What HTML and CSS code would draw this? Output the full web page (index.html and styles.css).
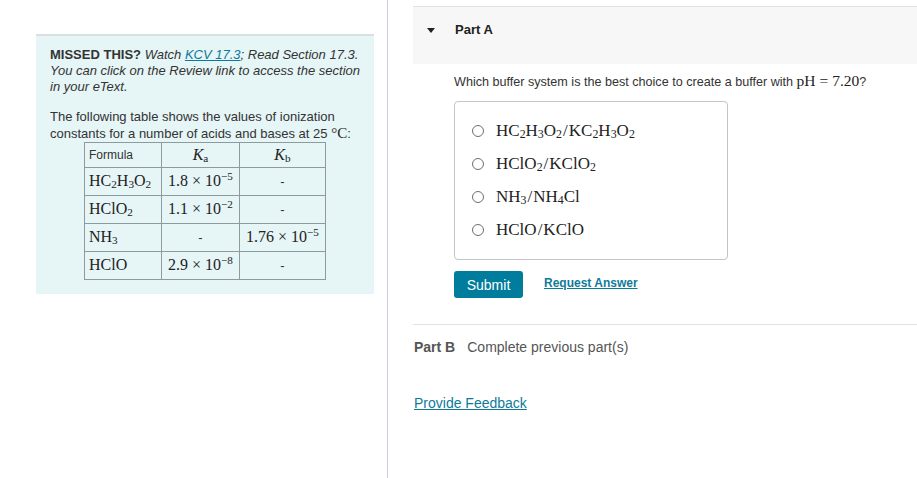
FILE: index.html
```html
<!DOCTYPE html>
<html lang="en">
<head>
<meta charset="utf-8">
<title>Part A</title>
<link rel="stylesheet" href="styles.css">
</head>
<body>
<div class="page">
  <aside class="left">
    <div class="panel">
      <p class="missed"><b>MISSED THIS?</b><span class="sp"> </span><i>Watch</i><span class="sp"> </span><a class="link"><i>KCV 17.3</i></a><i>; Read Section 17.3.</i> <i>You can click on the Review link to access the section in your eText.</i></p>
      <p><span>The following table shows the values of ionization</span> <span>constants for a number of acids and bases at 25</span><span class="sp"> </span><span class="m deg">°C</span><span>:</span></p>
      <table class="ktable">
        <colgroup><col class="c1"><col class="c2"><col class="c3"></colgroup>
        <tr class="head"><td class="f">Formula</td><td><span class="m"><i>K</i><sub>a</sub></span></td><td><span class="m"><i>K</i><sub>b</sub></span></td></tr>
        <tr><td class="f"><span class="m">HC<sub>2</sub>H<sub>3</sub>O<sub>2</sub></span></td><td><span class="m">1.8 × 10<sup>−5</sup></span></td><td>-</td></tr>
        <tr><td class="f"><span class="m">HClO<sub>2</sub></span></td><td><span class="m">1.1 × 10<sup>−2</sup></span></td><td>-</td></tr>
        <tr><td class="f"><span class="m">NH<sub>3</sub></span></td><td>-</td><td><span class="m">1.76 × 10<sup>−5</sup></span></td></tr>
        <tr><td class="f"><span class="m">HClO</span></td><td><span class="m">2.9 × 10<sup>−8</sup></span></td><td>-</td></tr>
      </table>
    </div>
  </aside>
  <main class="right">
    <section class="part-a">
      <div class="part-head"><span class="tri"></span><span class="part-title">Part A</span></div>
      <div class="part-body">
        <p class="question">Which buffer system is the best choice to create a buffer with <span class="m">pH<span class="eq">=</span>7.20</span>?</p>
        <div class="options">
          <div class="opt"><span class="radio"></span><span class="m">HC<sub>2</sub>H<sub>3</sub>O<sub>2</sub><span class="sl">/</span>KC<sub>2</sub>H<sub>3</sub>O<sub>2</sub></span></div>
          <div class="opt"><span class="radio"></span><span class="m">HClO<sub>2</sub><span class="sl">/</span>KClO<sub>2</sub></span></div>
          <div class="opt"><span class="radio"></span><span class="m">NH<sub>3</sub><span class="sl">/</span>NH<sub>4</sub>Cl</span></div>
          <div class="opt"><span class="radio"></span><span class="m">HClO<span class="sl">/</span>KClO</span></div>
        </div>
        <div class="actions">
          <button class="submit" type="button">Submit</button>
          <a class="request">Request Answer</a>
        </div>
      </div>
    </section>
    <section class="part-b"><b>Part B</b><span class="pb-text">Complete previous part(s)</span></section>
    <a class="feedback">Provide Feedback</a>
  </main>
</div>
</body>
</html>
```

FILE: styles.css
```css
* { box-sizing: border-box; }
html, body { margin: 0; padding: 0; background: #fff; }
body { font-family: "Liberation Sans", Arial, sans-serif; color: #333; }

.page { display: flex; min-height: 478px; }

.left { width: 387px; flex: none; padding: 34px 13px 0 36px; }
.panel {
  background: #e6f5f6;
  border-top: 2px solid #dadfe1;
  padding: 11px 14px 14px 14px;
  font-size: 13px;
  line-height: 16px;
}
.panel p { margin: 0; }
.panel p + p { margin-top: 14px; }
.link { color: #0e7a9b; text-decoration: underline; }

.m { font-family: "Liberation Serif", "Times New Roman", serif; color: #222; }
.m sub, .m sup { font-size: 0.7em; line-height: 0; }
.m sub { vertical-align: -0.2em; }
.m sup { vertical-align: 0.55em; }
.deg { font-size: 15px; }
.sl { margin: 0 1px; }
.eq { margin: 0 4px; }

.ktable {
  margin-left: 34px;
  border-collapse: collapse;
  width: 241px;
  table-layout: fixed;
}
.ktable .c1 { width: 77px; }
.ktable .c2 { width: 78px; }
.ktable .c3 { width: 86px; }
.ktable td {
  border: 1px solid #8e9a9c;
  height: 28px;
  padding: 0 2px;
  text-align: center;
  vertical-align: middle;
  font-size: 13px;
  white-space: nowrap;
}
.ktable .head td { height: 25px; font-size: 12px; }
.ktable td.f { text-align: left; padding-left: 4px; }
.ktable .m { font-size: 16px; }

.right { flex: 1; border-left: 1px solid #c7cfd8; padding-left: 25px; }

.part-head {
  margin-top: 6px;
  border-top: 1px solid #dfe3e7;
  background: #f7f7f7;
  height: 58px;
  padding: 15px 0 0 14px;
  display: flex;
  align-items: flex-start;
}
.tri {
  width: 0; height: 0;
  border-left: 4px solid transparent;
  border-right: 4px solid transparent;
  border-top: 5px solid #222;
  margin-top: 6px;
}
.part-title { margin-left: 20px; font-size: 13px; font-weight: bold; line-height: 16px; color: #222; }

.part-body { padding-left: 41px; }
.question { margin: 9px 0 0 0; font-size: 12.6px; line-height: 16px; }
.question .m { font-size: 15.5px; }

.options {
  margin-top: 11px;
  width: 274px;
  border: 1px solid #c4c4c4;
  border-radius: 4px;
  padding: 12px 0 13px 17px;
}
.opt { height: 33px; display: flex; align-items: center; }
.radio {
  width: 12px; height: 12px;
  border: 1px solid #6e6e6e;
  border-radius: 50%;
  background: #fff;
  flex: none;
}
.opt .m { margin-left: 12px; font-size: 17px; }

.actions { margin-top: 11px; display: flex; align-items: center; }
.submit {
  width: 69px; height: 27px;
  background: #007c9d;
  color: #fff;
  border: 0;
  border-radius: 3px;
  font-family: "Liberation Sans", Arial, sans-serif;
  font-size: 14px;
  padding: 0;
}
.request {
  margin-left: 21px;
  margin-bottom: 3px;
  font-size: 12px;
  font-weight: bold;
  color: #0e7a9b;
  text-decoration: underline;
}

.part-b {
  margin-top: 26px;
  border-top: 1px solid #dfe3e7;
  padding-top: 14px;
  font-size: 14px;
  line-height: 16px;
  color: #555;
  padding-left: 1px;
}
.pb-text { margin-left: 12px; }

.feedback {
  display: inline-block;
  margin-top: 40px;
  margin-left: 1px;
  font-size: 14px;
  line-height: 16px;
  color: #0e7a9b;
  text-decoration: underline;
}
```
